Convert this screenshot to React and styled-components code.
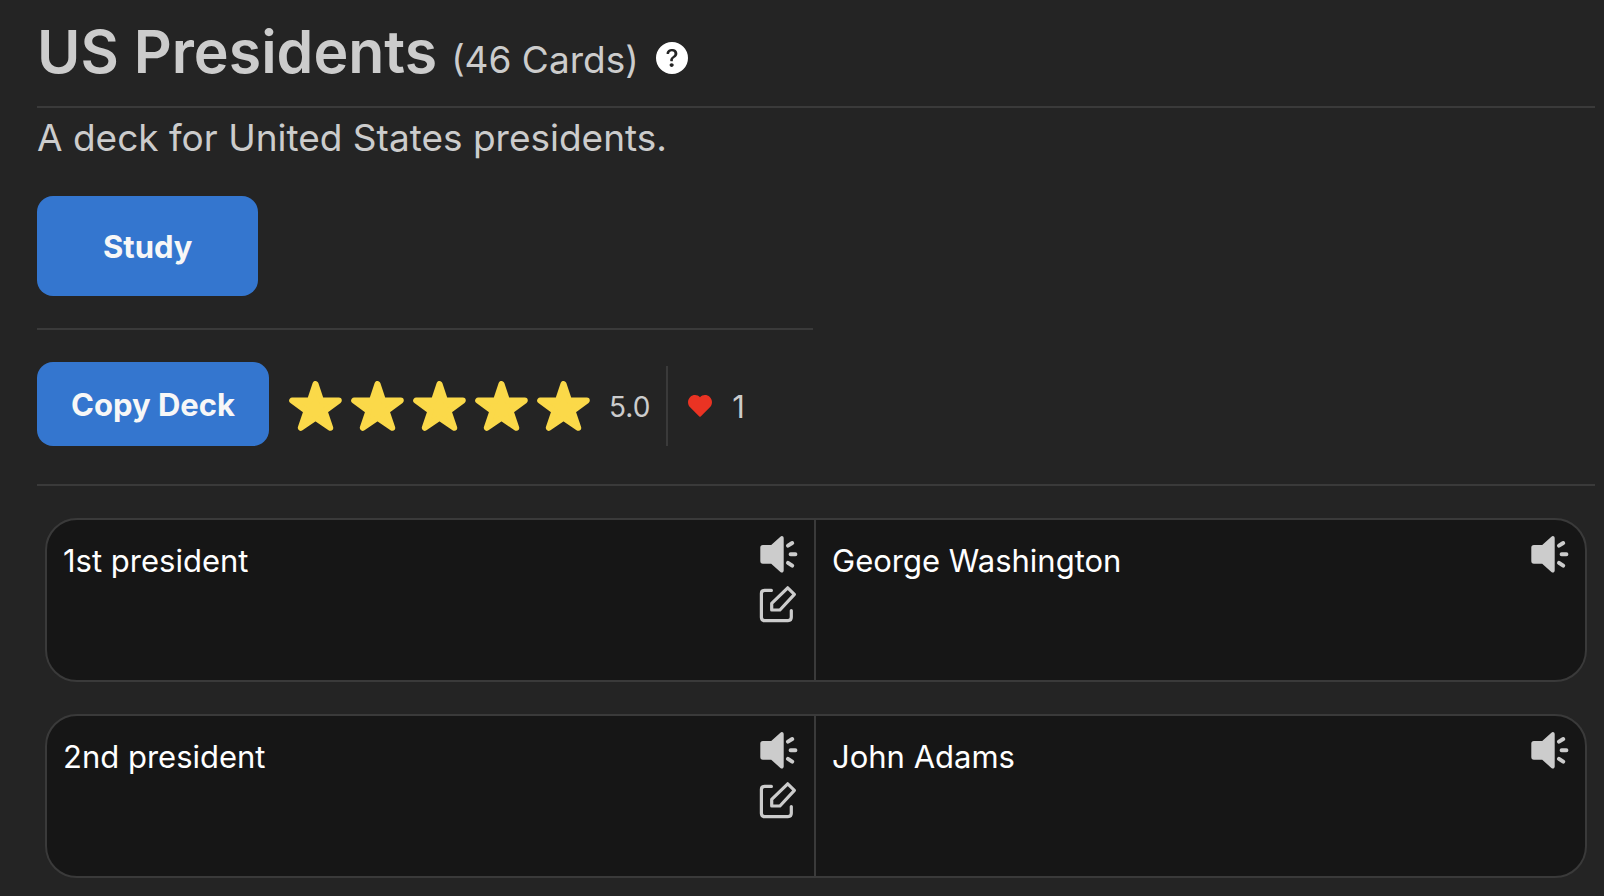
import React from "react";
import styled, { createGlobalStyle } from "styled-components";
import { BsQuestionCircleFill } from "react-icons/bs";

const GlobalStyle = createGlobalStyle`
  *, *::before, *::after { box-sizing: border-box; }
  body {
    margin: 0;
    background: #242424;
    color: #cccccc;
    font-family: Inter, "Liberation Sans", sans-serif;
    font-size: 31px;
    line-height: 48px;
  }
  button { font: inherit; }
`;

const Page = styled.main`
  padding: 10px 9px 18px 37px;
`;

const Header = styled.header`
  display: flex;
  align-items: baseline;
  height: 98px;
  border-bottom: 2px solid #3a3a3a;
`;

const Title = styled.h1`
  margin: 0;
  font-size: 59px;
  line-height: 84px;
  font-weight: 600;
`;

const CardCount = styled.span`
  margin: 0 17px 0 14px;
  font-size: 37px;
`;

const HelpButton = styled.button`
  align-self: flex-start;
  display: flex;
  margin-top: 32px;
  padding: 0;
  border: 0;
  background: none;
  color: #ffffff;
  cursor: pointer;
`;

const Description = styled.p`
  margin: 0;
  padding-top: 4px;
  font-size: 37px;
  line-height: 52px;
`;

const Actions = styled.section`
  display: flex;
  flex-direction: column;
  align-items: flex-start;
  gap: 32px;
  padding: 32px 0 38px;
  border-bottom: 2px solid #3a3a3a;
`;

const Button = styled.button`
  padding: ${(p) => (p.$large ? "27px 66px 25px" : "19px 34px 17px")};
  border: 0;
  border-radius: 16px;
  background: #3476cf;
  color: #f7f7f7;
  font-weight: 700;
  white-space: nowrap;
  cursor: pointer;
`;

const HalfRule = styled.hr`
  width: calc(50% - 3px);
  height: 2px;
  margin: 0;
  border: 0;
  background: #3a3a3a;
`;

const RatingRow = styled.div`
  display: flex;
  align-items: center;
`;

const Stars = styled.div`
  display: flex;
  gap: 9px;
  padding: 4px 19px 0 20px;
`;

const Score = styled.span`
  padding: 6px 16px 0 0;
  font-size: 28px;
`;

const Likes = styled.div`
  display: flex;
  align-items: center;
  align-self: flex-end;
  gap: 20px;
  height: 80px;
  padding-left: 20px;
  border-left: 2px solid #3a3a3a;
`;

const LikeCount = styled.span`
  padding-top: 2px;
`;

const CardList = styled.ul`
  display: flex;
  flex-direction: column;
  gap: 32px;
  margin: 0;
  padding: 32px 8px 0;
  list-style: none;
`;

const Card = styled.li`
  display: grid;
  grid-template-columns: 1fr 1fr;
  min-height: 164px;
  border: 2px solid #3a3a3a;
  border-radius: 32px;
  background: #161616;
  color: #ffffff;
`;

const Side = styled.div`
  display: flex;
  justify-content: space-between;
  padding: 14px 16px;

  &:first-child { border-right: 2px solid #3a3a3a; }
`;

const SideText = styled.p`
  margin: 0;
  padding-top: 3px;
`;

const Tools = styled.div`
  display: flex;
  flex-direction: column;
  gap: 10px;
`;

const IconButton = styled.button`
  display: flex;
  padding: 0;
  border: 0;
  background: none;
  color: #cccccc;
  cursor: pointer;
`;

const Star = () => (
  <svg width="53" height="50" viewBox="0 0 53 50" aria-hidden="true">
    <path
      d="M26.5 3 32 19.5H49.8L35.5 30 41.2 46.8 26.5 36.8 11.8 46.8 17.5 30 3.2 19.5H21Z"
      fill="#fbd949"
      stroke="#fbd949"
      strokeWidth="6"
      strokeLinejoin="round"
    />
  </svg>
);

const Heart = () => (
  <svg width="24" height="22" viewBox="0 0 24 22" aria-hidden="true">
    <path
      d="M12 2.2C14.5-.6 19-.7 21.8 2 24.7 4.9 24.7 9.4 21.9 12.2L12.7 21.4Q12 22 11.3 21.4L2.1 12.2C-.7 9.4-.7 4.9 2.2 2 5-.7 9.5-.6 12 2.2Z"
      fill="#ea3323"
    />
  </svg>
);

const SpeakerIcon = () => (
  <svg width="40" height="40" viewBox="0 0 40 40" aria-hidden="true">
    <path
      d="M4.9 11H13.2L22.4 2.7C23.7 1.5 25.7 2.2 25.7 4.2V36.6C25.7 38.6 23.7 39.2 22.4 38L13.2 29.7H4.9Q2.3 29.7 2.3 27.1V13.6Q2.3 11 4.9 11Z"
      fill="currentColor"
    />
    <path
      d="M30 11.6 34.2 9M32.6 20.3H37.4M30 28.9 34.2 31.7"
      fill="none"
      stroke="currentColor"
      strokeWidth="4"
      strokeLinecap="round"
    />
  </svg>
);

const EditIcon = () => (
  <svg
    width="40"
    height="40"
    viewBox="0 0 40 40"
    fill="none"
    stroke="currentColor"
    strokeWidth="3.2"
    strokeLinecap="round"
    strokeLinejoin="round"
    aria-hidden="true"
  >
    <path d="M13.4 6.4H6.6Q3.4 6.4 3.4 9.6V33.3Q3.4 36.6 6.6 36.6H30Q33.3 36.6 33.3 33.3V26.6" />
    <path d="M29.7 3.8 36.4 10.3 21.9 26H13.7V19.4Z" />
  </svg>
);

const cards = [
  { front: "1st president", back: "George Washington" },
  { front: "2nd president", back: "John Adams" },
];

export default function App() {
  return (
    <>
      <GlobalStyle />
      <Page>
        <Header>
          <Title>US Presidents</Title>
          <CardCount>(46 Cards)</CardCount>
          <HelpButton type="button" aria-label="Help">
            <BsQuestionCircleFill size={32} />
          </HelpButton>
        </Header>
        <Description>A deck for United States presidents.</Description>
        <Actions>
          <Button type="button" $large>Study</Button>
          <HalfRule />
          <RatingRow>
            <Button type="button">Copy Deck</Button>
            <Stars role="img" aria-label="5 out of 5 stars">
              {[1, 2, 3, 4, 5].map((n) => <Star key={n} />)}
            </Stars>
            <Score>5.0</Score>
            <Likes>
              <Heart />
              <LikeCount>1</LikeCount>
            </Likes>
          </RatingRow>
        </Actions>
        <CardList>
          {cards.map((card) => (
            <Card key={card.front}>
              <Side>
                <SideText>{card.front}</SideText>
                <Tools>
                  <IconButton type="button" aria-label={`Listen to ${card.front}`}>
                    <SpeakerIcon />
                  </IconButton>
                  <IconButton type="button" aria-label={`Edit ${card.front}`}>
                    <EditIcon />
                  </IconButton>
                </Tools>
              </Side>
              <Side>
                <SideText>{card.back}</SideText>
                <Tools>
                  <IconButton type="button" aria-label={`Listen to ${card.back}`}>
                    <SpeakerIcon />
                  </IconButton>
                </Tools>
              </Side>
            </Card>
          ))}
        </CardList>
      </Page>
    </>
  );
}
